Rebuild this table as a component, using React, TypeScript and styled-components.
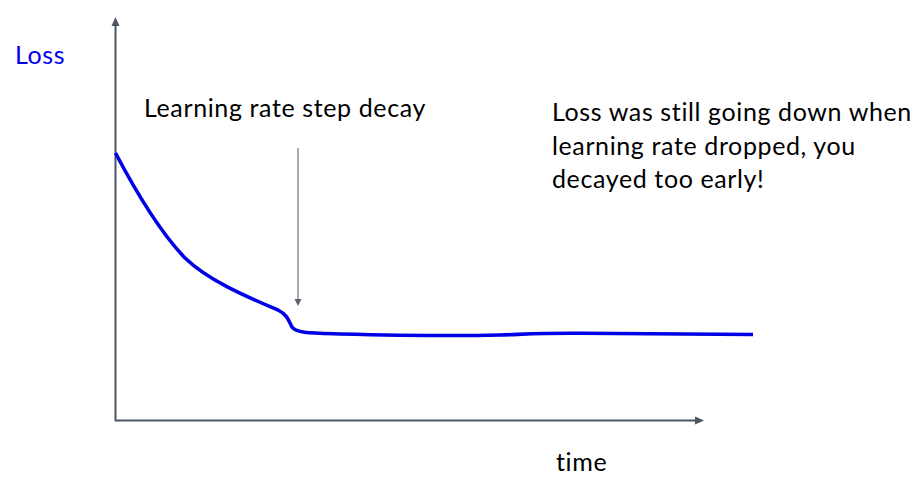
import React from "react";
import styled, { createGlobalStyle } from "styled-components";

const Global = createGlobalStyle`
  html, body { margin: 0; padding: 0; background: #ffffff; }
  #root { width: 924px; height: 497px; }
`;

const Slide = styled.div`
  display: grid;
  width: 924px;
  height: 497px;
  background: #ffffff;
  overflow: hidden;
  font-family: Lato, "Open Sans", sans-serif;
  font-size: 25px;
  line-height: 31px;
  letter-spacing: 0.62px;
  font-variant-ligatures: none;
  font-feature-settings: "liga" 0, "clig" 0;
  color: #000000;
  & > * {
    grid-area: 1 / 1;
  }
`;

const Chart = styled.svg`
  display: block;
  width: 924px;
  height: 497px;
`;

const Annotations = styled.div`
  display: grid;
  grid-template-columns: 144px 408px 1fr;
  grid-template-rows: 53px 1fr auto;
  padding: 39px 0 20px 0;
  box-sizing: border-box;
  height: 497px;
`;

const AxisTitle = styled.div<{ $color?: string }>`
  color: ${(p) => p.$color ?? "#000000"};
  white-space: nowrap;
`;

const YTitle = styled(AxisTitle)`
  grid-column: 1;
  grid-row: 1;
  padding-left: 15px;
`;

const StepLabel = styled.div`
  grid-column: 2;
  grid-row: 2;
  white-space: nowrap;
`;

const Note = styled.div`
  grid-column: 3;
  grid-row: 2;
  margin-top: 3px;
  line-height: 33.5px;
  white-space: nowrap;
`;

const XTitle = styled(AxisTitle)`
  grid-column: 3;
  grid-row: 3;
  padding-left: 4px;
`;

const AXIS = "#4d5663";
const POINTER = "#8c9199";
const CURVE = "#0000e6";

export default function App() {
  return (
    <>
      <Global />
      <Slide>
        <Chart viewBox="0 0 924 497">
          {/* y axis */}
          <line x1="115.5" y1="421" x2="115.5" y2="25" stroke={AXIS} strokeWidth="2" />
          <polygon points="115.5,17 111.5,26 119.5,26" fill={AXIS} />
          {/* x axis */}
          <line x1="115" y1="420.5" x2="697" y2="420.5" stroke={AXIS} strokeWidth="2" />
          <polygon points="704,420.5 695,416.5 695,424.5" fill={AXIS} />
          {/* pointer arrow */}
          <line x1="298" y1="148" x2="298" y2="300" stroke={POINTER} strokeWidth="1.5" />
          <polygon points="298,306 294.5,299 301.5,299" fill="#5b6270" />
          {/* loss curve */}
          <path
            d="M115.5 153 C 135 190, 160 232, 185 258 C 210 282, 250 298, 278 310 C 288 315, 289 322, 292 327 C 296 333, 310 333, 340 334 C 400 335.5, 460 336, 500 335 C 530 334, 545 333, 580 333.3 C 640 333.5, 700 334.5, 753 334.5"
            fill="none"
            stroke={CURVE}
            strokeWidth="3.6"
            strokeLinecap="butt"
          />
        </Chart>
        <Annotations>
          <YTitle $color="#0000ee">Loss</YTitle>
          <StepLabel>Learning rate step decay</StepLabel>
          <Note>
            Loss was still going down when
            <br />
            learning rate dropped, you
            <br />
            decayed too early!
          </Note>
          <XTitle>time</XTitle>
        </Annotations>
      </Slide>
    </>
  );
}
